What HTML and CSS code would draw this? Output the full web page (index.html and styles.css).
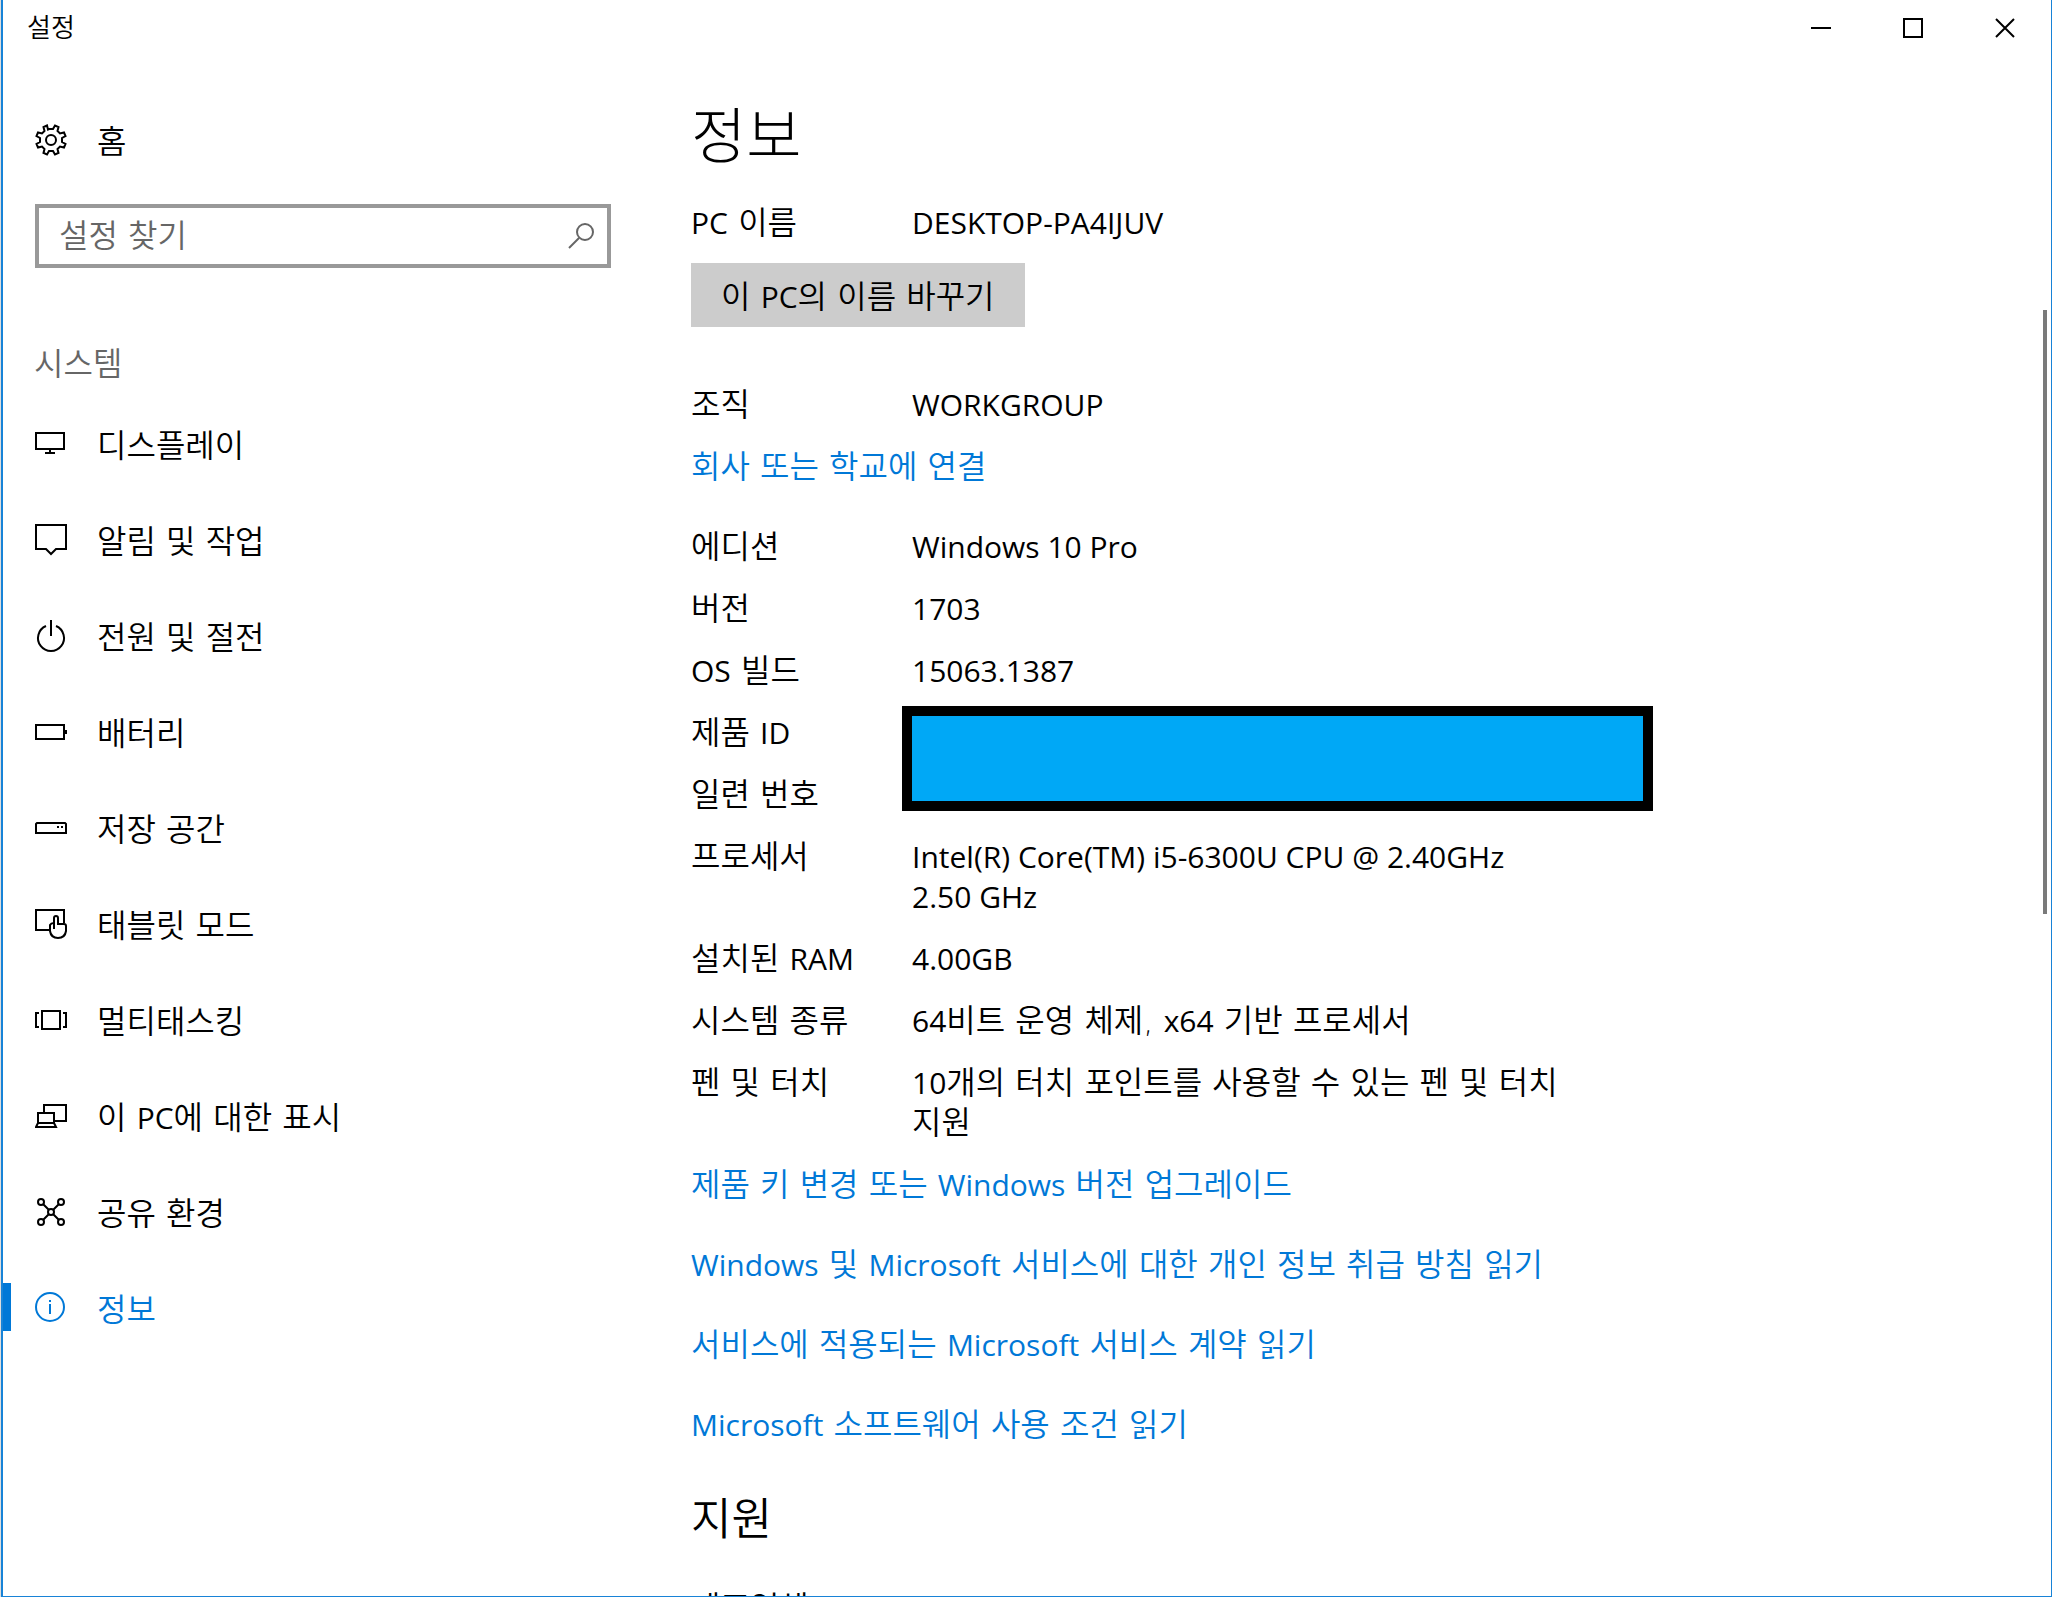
FILE: index.html
```
<!DOCTYPE html>
<html lang="ko">
<head>
  <meta charset="UTF-8">
  <title>설정</title>
  <meta name="viewport" content="width=device-width, initial-scale=1.0">
  <link rel="stylesheet" href="styles.css">
</head>
<body>
  <div class="window">
    <header class="titlebar">
      <span class="window-title">설정</span>
      <div class="window-buttons">
        <button type="button" aria-label="최소화">
          <svg width="20" height="20" viewBox="0 0 20 20"><path d="M0 10h20"/></svg>
        </button>
        <button type="button" aria-label="최대화">
          <svg width="20" height="20" viewBox="0 0 20 20"><path d="M1 1h18v18H1z"/></svg>
        </button>
        <button type="button" aria-label="닫기">
          <svg width="20" height="20" viewBox="0 0 20 20"><path d="M1 1l18 18M19 1L1 19"/></svg>
        </button>
      </div>
    </header>

    <div class="content">
      <aside class="sidebar">
        <a class="home" href="#">
          <svg class="icon" viewBox="0 0 32 32">
            <path d="M13 5.5 12 1.5 8.5 3 9.5 7 7 9.500 3 8.500 1.500 12 5 14 5 18 1.500 20 3 23.500 7 22.500 9.500 25 8.500 29 12 30.500 14 27 18 27 20 30.500 23.500 29 22.500 25 25 22.500 29 23.500 30.500 20 27 18 27 14 30.500 12 29 8.500 25 9.500 22.500 7 23.500 3 20 1.500 18 5 14 5z"/>
            <circle cx="16" cy="16" r="5"/>
          </svg>
          <span>홈</span>
        </a>

        <form class="search">
          <input type="text" placeholder="설정 찾기" aria-label="설정 찾기">
          <svg class="search-icon" width="26" height="26" viewBox="0 0 26 26"><circle cx="17" cy="9" r="8"/><path d="M11 15 1 25"/></svg>
        </form>

        <h2 class="group-title">시스템</h2>
        <nav class="menu">
          <a href="#">
            <svg class="icon" viewBox="0 0 32 32"><path d="M1 5h28v16H1zM15 21v4M10 25h10"/></svg>
            <span>디스플레이</span>
          </a>
          <a href="#">
            <svg class="icon" viewBox="0 0 32 32"><path d="M1 1h30v24h-10l-5 5-5-5H1z"/></svg>
            <span>알림 및 작업</span>
          </a>
          <a href="#">
            <svg class="icon" viewBox="0 0 32 32"><path d="M11 6a13 13 0 1 0 10 0M16 0v16"/></svg>
            <span>전원 및 절전</span>
          </a>
          <a href="#">
            <svg class="icon" viewBox="0 0 32 32"><path d="M1 9h28v14H1zM31 14v4"/></svg>
            <span>배터리</span>
          </a>
          <a href="#">
            <svg class="icon" viewBox="0 0 32 32"><path d="M2 11h28l1 1v9H1v-9zM22 15h2M26 15h2"/></svg>
            <span>저장 공간</span>
          </a>
          <a href="#">
            <svg class="icon" viewBox="0 0 32 32"><path d="M15 22H1V2h28v13M19 21V10q0-2 2-2t2 2v6h6q2 0 2 2v5q-1 7-8 7t-8-7v-6q1-2 4-2"/></svg>
            <span>태블릿 모드</span>
          </a>
          <a href="#">
            <svg class="icon" viewBox="0 0 32 32"><path d="M7 7h18v18H7zM4 9H1v14h3M28 9h3v14h-3"/></svg>
            <span>멀티태스킹</span>
          </a>
          <a href="#">
            <svg class="icon" viewBox="0 0 32 32"><path d="M9 12V5h22v16H20M3 13h16v10H3zM3 23l-2 4h20l-2-4"/></svg>
            <span>이 <span lang="en">PC</span>에 대한 표시</span>
          </a>
          <a href="#">
            <svg class="icon" viewBox="0 0 32 32"><circle cx="6" cy="6" r="3"/><circle cx="26" cy="6" r="3"/><circle cx="16" cy="16" r="3"/><circle cx="6" cy="26" r="3"/><circle cx="26" cy="26" r="3"/><path d="M8 8l6 6M24 8l-6 6M8 24l6-6M24 24l-6-6"/></svg>
            <span>공유 환경</span>
          </a>
          <a class="active" href="#">
            <svg class="icon" viewBox="0 0 32 32"><circle cx="15" cy="15" r="14"/><path d="M15 12v10M15 8v2"/></svg>
            <span>정보</span>
          </a>
        </nav>
      </aside>

      <main class="about">
        <h1>정보</h1>

        <dl class="specs">
          <div><dt><span lang="en">PC</span> 이름</dt><dd><span lang="en">DESKTOP-PA4IJUV</span></dd></div>
        </dl>
        <button class="rename" type="button">이 <span lang="en">PC</span>의 이름 바꾸기</button>

        <dl class="specs">
          <div><dt>조직</dt><dd><span lang="en">WORKGROUP</span></dd></div>
        </dl>
        <a class="join" href="#">회사 또는 학교에 연결</a>

        <dl class="specs">
          <div><dt>에디션</dt><dd><span lang="en">Windows 10 Pro</span></dd></div>
          <div><dt>버전</dt><dd><span lang="en">1703</span></dd></div>
          <div><dt><span lang="en">OS</span> 빌드</dt><dd><span lang="en">15063.1387</span></dd></div>
          <div class="masked"><dt>제품 <span lang="en">ID</span></dt><dd><span class="mask"></span></dd></div>
          <div><dt>일련 번호</dt><dd></dd></div>
          <div><dt>프로세서</dt><dd><span lang="en">Intel(R) Core(TM) i5-6300U CPU @ 2.40GHz 2.50&nbsp;GHz</span></dd></div>
          <div><dt>설치된 <span lang="en">RAM</span></dt><dd><span lang="en">4.00GB</span></dd></div>
          <div><dt>시스템 종류</dt><dd><span lang="en">64</span>비트 운영 체제, <span lang="en">x64</span> 기반 프로세서</dd></div>
          <div><dt>펜 및 터치</dt><dd><span lang="en">10</span>개의 터치 포인트를 사용할 수 있는 펜 및 터치 지원</dd></div>
        </dl>

        <div class="links">
          <a href="#">제품 키 변경 또는 <span lang="en">Windows</span> 버전 업그레이드</a>
          <a href="#"><span lang="en">Windows</span> 및 <span lang="en">Microsoft</span> 서비스에 대한 개인 정보 취급 방침 읽기</a>
          <a href="#">서비스에 적용되는 <span lang="en">Microsoft</span> 서비스 계약 읽기</a>
          <a href="#"><span lang="en">Microsoft</span> 소프트웨어 사용 조건 읽기</a>
        </div>

        <h2 class="support-title">지원</h2>
        <dl class="specs">
          <div><dt>제조업체</dt><dd><span lang="en">Microsoft</span></dd></div>
        </dl>
      </main>
    </div>

    <div class="scrollbar"></div>
  </div>
</body>
</html>
```
FILE: styles.css
```
* {
  box-sizing: border-box;
}

body {
  margin: 0;
  font-family: "DejaVu Sans", "Noto Sans CJK KR", sans-serif;
  font-size: 32px;
  font-weight: 350;
  line-height: 40px;
  color: #000;
  background: #ddd;
}

/* latin runs are a little smaller than the hangul around them */
[lang="en"] {
  font-family: "Open Sans", "Noto Sans", sans-serif;
  font-size: 30px;
  font-weight: 400;
  line-height: 1;
}

a {
  color: #0078d7;
  text-decoration: none;
}

h1, h2, dl, dd {
  margin: 0;
  font-weight: 350;
}

button {
  font: inherit;
  color: inherit;
  border: none;
  background: none;
  cursor: pointer;
}

svg {
  fill: none;
  stroke: currentColor;
  stroke-width: 2;
}

.window {
  position: relative;
  display: flex;
  flex-direction: column;
  height: 100vh;
  margin-left: 1px;
  overflow: hidden;
  background: #fff;
  border: 1px solid #1883d7;
  border-width: 0 1px 1px 2px;
}

.titlebar {
  flex: none;
  display: flex;
  justify-content: space-between;
  height: 56px;
  padding-left: 24px;
}

.window-title {
  font-size: 26px;
  line-height: 56px;
}

.window-buttons {
  display: flex;
}

.window-buttons button {
  display: flex;
  align-items: center;
  justify-content: center;
  width: 92px;
  padding: 0;
}

.content {
  flex: 1;
  display: flex;
  min-height: 0;
}

.sidebar {
  flex: none;
  width: 688px;
}

.home,
.menu a {
  display: flex;
  align-items: center;
  gap: 30px;
  height: 96px;
  padding-top: 2px;
  padding-left: 32px;
  color: #000;
}

.home > span,
.menu a > span {
  padding-top: 3px;
}

.home {
  margin-top: 35px;
}

.icon {
  flex: none;
  width: 32px;
  height: 32px;
}

.search {
  position: relative;
  width: 576px;
  margin: 17px 0 0 32px;
}

.search input {
  display: block;
  width: 100%;
  height: 64px;
  padding: 0 60px 0 20px;
  font: inherit;
  border: 4px solid #999;
}

.search input::placeholder {
  color: #666;
  opacity: 1;
}

.search-icon {
  position: absolute;
  top: 19px;
  right: 17px;
  color: #666;
}

.group-title {
  margin: 76px 0 11px 31px;
  font-size: 32px;
  color: #666;
}

.menu .active {
  position: relative;
  color: #0078d7;
}

.menu .active::before {
  content: "";
  position: absolute;
  top: 24px;
  left: 0;
  width: 8px;
  height: 48px;
  background: #0078d7;
}

.about {
  flex: 1;
  min-width: 0;
}

.about h1 {
  margin: 41px 0 26px;
  font-size: 60px;
  font-weight: 300;
  line-height: 80px;
}

.specs {
  display: flex;
  flex-direction: column;
  gap: 22px;
}

.specs div {
  display: flex;
}

.specs dt {
  flex: none;
  width: 221px;
}

.specs dd {
  max-width: 670px;
}

.rename {
  display: block;
  height: 64px;
  margin: 20px 0 58px;
  padding: 3px 30px 0;
  background: #ccc;
}

.join {
  display: block;
  margin: 22px 0 40px;
}

.masked dd {
  position: relative;
}

/* covers the product id and the serial number */
.mask {
  position: absolute;
  top: -7px;
  left: -10px;
  width: 751px;
  height: 105px;
  background: #00a8f6;
  border: 10px solid #000;
}

.links {
  display: flex;
  flex-direction: column;
  align-items: flex-start;
  gap: 40px;
  margin-top: 22px;
}

.support-title {
  margin: 45px 0 38px;
  font-size: 44px;
  line-height: 60px;
}

.scrollbar {
  position: absolute;
  top: 310px;
  right: 4px;
  width: 4px;
  height: 604px;
  background: #7a7a7a;
}
```
